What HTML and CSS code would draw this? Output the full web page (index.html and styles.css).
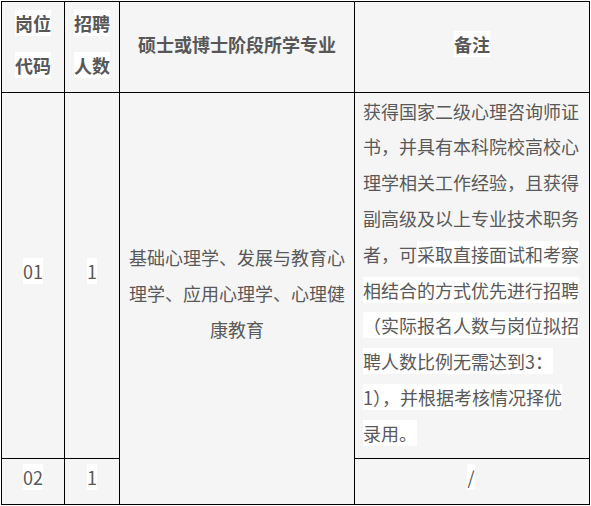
FILE: index.html
```html
<!DOCTYPE html>
<html lang="zh-CN">
<head>
<meta charset="utf-8">
<title>岗位表</title>
<link rel="stylesheet" href="styles.css">
</head>
<body>
<table class="jobs">
  <colgroup>
    <col class="c-code">
    <col class="c-num">
    <col class="c-major">
    <col class="c-note">
  </colgroup>
  <thead>
    <tr class="head-row">
      <th class="narrow"><span class="hl">岗位</span><span class="hl">代码</span></th>
      <th class="narrow"><span class="hl">招聘</span><span class="hl">人数</span></th>
      <th class="wide">硕士或博士阶段所学专业</th>
      <th class="wide"><span class="hl">备注</span></th>
    </tr>
  </thead>
  <tbody>
    <tr class="row-1">
      <td class="narrow center"><span class="hl">01</span></td>
      <td class="narrow center"><span class="hl">1</span></td>
      <td class="wide center major" rowspan="2">基础心理学、发展与教育心理学、应用心理学、心理健康教育</td>
      <td class="note">获得国家二级心理咨询师证书，并具有本科院校高校心理学相关工作经验，且获得副高级及以上专业技术职务者，可<span class="hl">采取直接面试和考察相结合的方式优先进行招聘（实际报名人数与岗位拟招聘人数比例无需达到3：1），并根据考核情况择优录用。</span></td>
    </tr>
    <tr class="row-2">
      <td class="narrow center"><span class="hl">02</span></td>
      <td class="narrow center"><span class="hl">1</span></td>
      <td class="note center"><span class="hl">/</span></td>
    </tr>
  </tbody>
</table>
</body>
</html>
```

FILE: styles.css
```css
html, body {
  margin: 0;
  padding: 0;
  background: #ffffff;
}

body {
  padding: 1px 0 0 1px;
  font-family: "Noto Sans CJK SC", "Noto Sans", sans-serif;
  font-size: 18px;
  color: #595959;
}

.jobs {
  border-collapse: collapse;
  table-layout: fixed;
  width: 589px;
  background: #f5f5f5;
}

.c-code { width: 63px; }
.c-num { width: 55px; }
.c-major { width: 235px; }
.c-note { width: 235px; }

.jobs th,
.jobs td {
  border: 1px solid #000000;
  vertical-align: middle;
}

.jobs th {
  font-weight: 700;
  text-align: center;
  color: #575757;
}

.head-row { height: 91px; }
.row-1 { height: 366px; }
.row-2 { height: 46px; }

.jobs .narrow {
  padding: 0 8px 10px;
  line-height: 36px;
  text-align: center;
}

.jobs .wide {
  padding: 0 9px 10px;
  line-height: 36px;
}

.jobs th.narrow,
.jobs th.wide {
  padding-bottom: 6px;
  line-height: 42px;
}

.jobs .major {
  padding-bottom: 12px;
}

.jobs .center { text-align: center; }

.jobs .note {
  padding: 0 10px 6px 8px;
  line-height: 35.8px;
  text-align: left;
}

.jobs .note.center { text-align: center; }

.row-2 .narrow,
.row-2 .note {
  line-height: 34px;
}

.jobs .row-2 td.narrow,
.jobs .row-2 td.note {
  padding-bottom: 10px;
}

.hl {
  background: #ffffff;
}
```
